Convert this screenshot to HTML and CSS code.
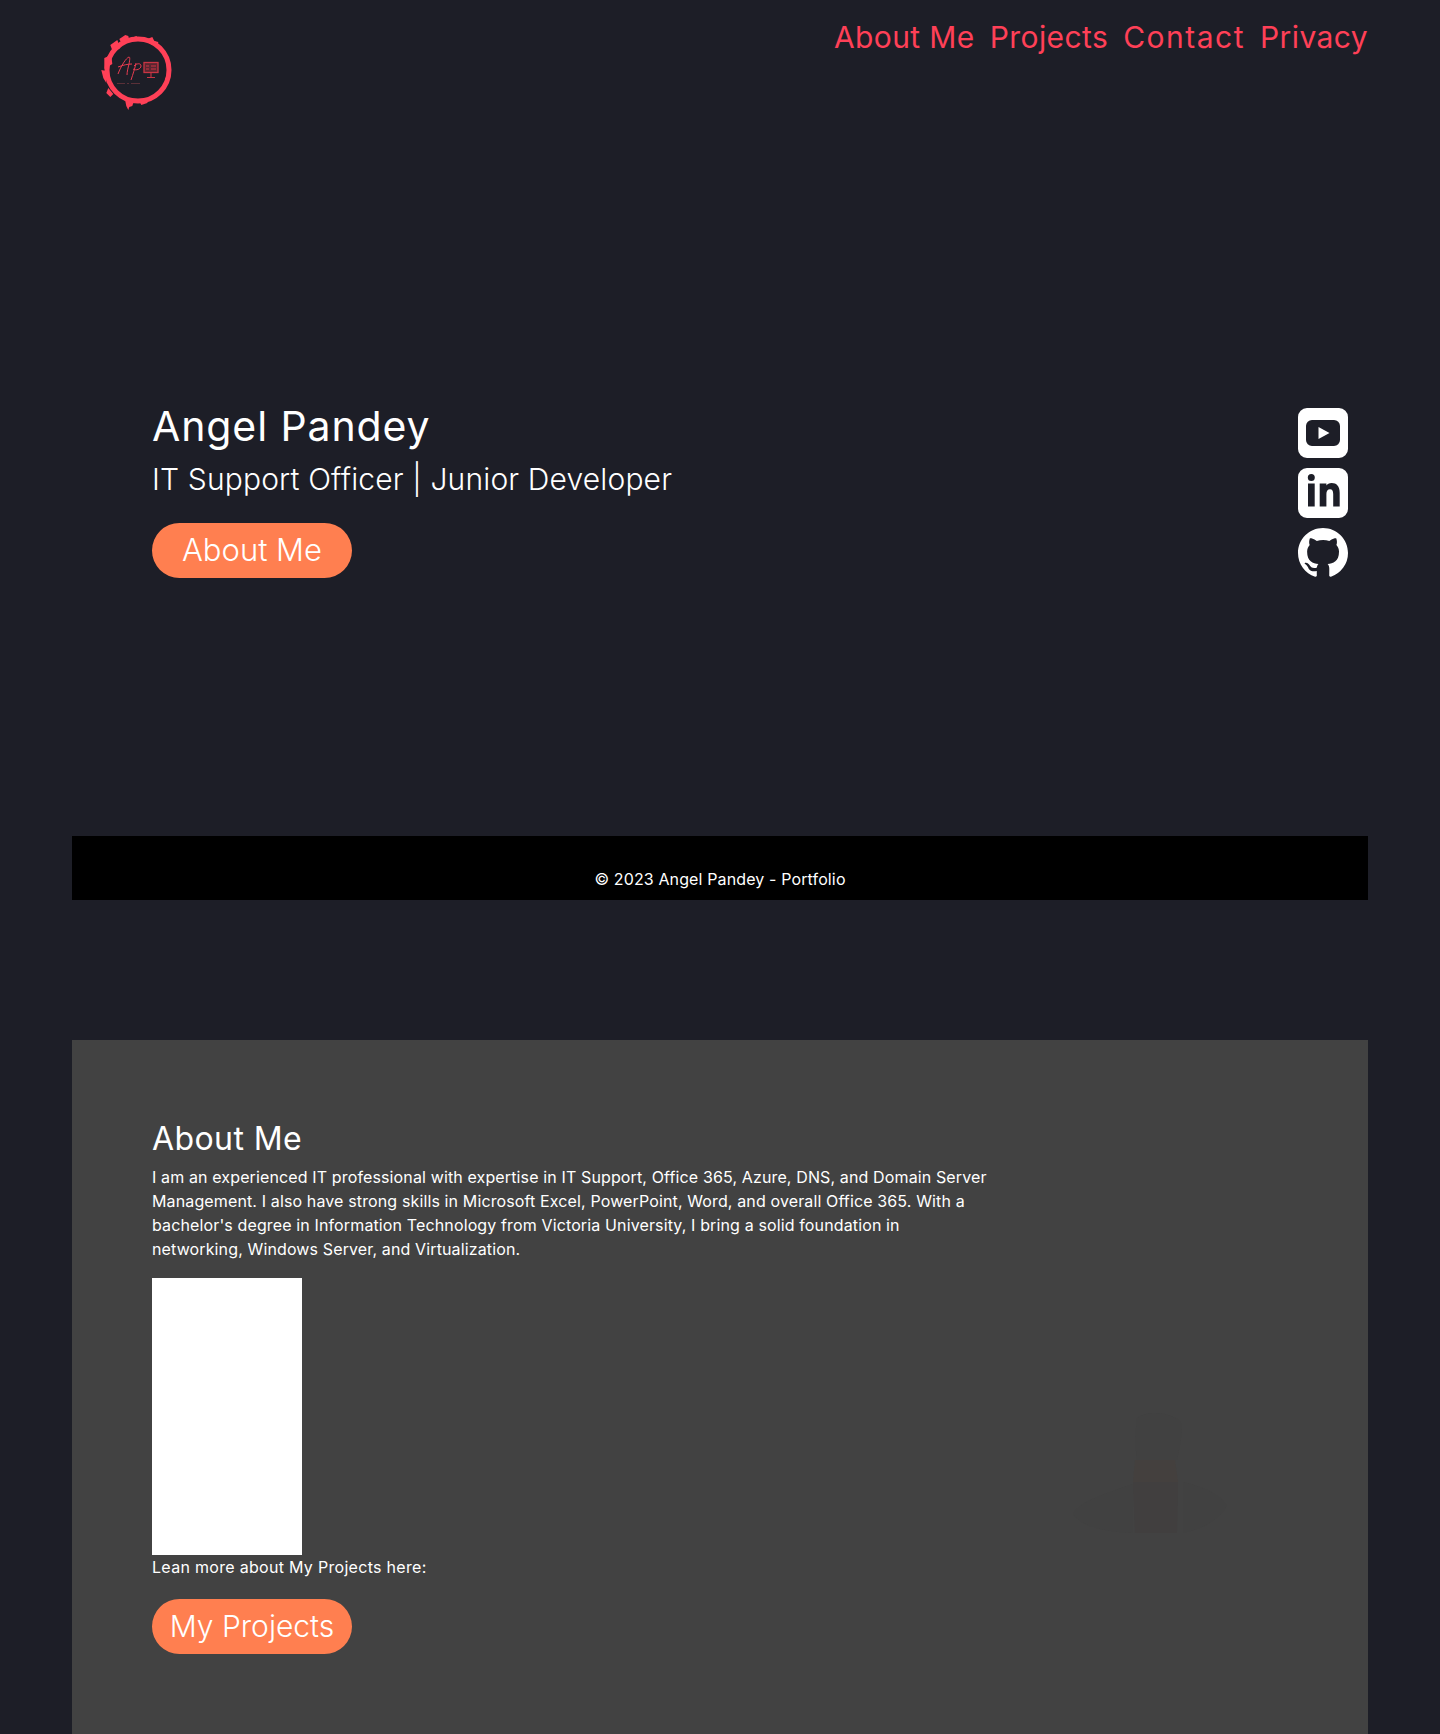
FILE: index.html
```html
<!DOCTYPE html>
<html lang="en">
<head>
<meta charset="utf-8">
<title>Angel Pandey - Portfolio</title>
<link rel="stylesheet" href="styles.css">
</head>
<body>
<div class="page">
  <header class="topbar">
    <a class="logo" href="#" aria-label="Angel Pandey logo">
      <svg viewBox="0 0 120 100" width="120" height="100">
        <circle cx="58" cy="50" r="31" fill="none" stroke="#ff4057" stroke-width="5"/>
        <path transform="translate(1.300 0)" fill="#ff4057" d="M29 25l7-5 3 8-7 5zM23 38l7-3 1 9-8 5zM38 19l6-4 3 1 1 4-8 3zM50 18l5-2 3 3-7 2zM60 17l6 2 5-2 2 4 4 1-1 5-9-4zM20 50l5 1 0 12-3-5zM27 68l5 6-3 3-4-4zM42 77l6 4 5-1-2 6-3 1-1 3-2-4-1-5zM58 81l9-2-1 4-6 2zM84 58l3-2-1 8-3 3z"/>
        <path d="M38 54c3-8 8-16 11-17 1 0 1 2 0 7-1 4-2 8-2 11M38 47c5-2 10-3 14-3M56 43c-1 5-3 11-5 17M54 46c3-3 7-3 7 0s-5 5-8 3" fill="none" stroke="#e73c50" stroke-width="1"/>
        <rect x="64" y="42.500" width="14" height="10" fill="#5a2630" stroke="#c93544" stroke-width="1.300"/>
        <path d="M66 46h3M71 46h5M66 49h3M71 49h5M67 57.500h8M71 53v4" stroke="#c93544" stroke-width="1.100"/>
        <path d="M37 63.500h8M47 63.500h2M51 63.500h9" stroke="#5a3038" stroke-width="1"/>
      </svg>
    </a>
    <nav class="nav">
      <a href="#">About Me</a>
      <a href="#">Projects</a>
      <a class="nav-wide" href="#">Contact</a>
      <a href="#">Privacy</a>
    </nav>
  </header>

  <section class="hero">
    <div class="intro">
      <h1>Angel Pandey</h1>
      <h2>IT Support Officer | Junior Developer</h2>
      <a class="btn btn-hero" href="#">About Me</a>
    </div>
    <div class="socials">
      <a href="#" aria-label="YouTube"><svg viewBox="0 0 50 50" width="50" height="50"><path fill-rule="evenodd" fill="#fff" d="M9 0h32a9 9 0 0 1 9 9v32a9 9 0 0 1-9 9H9a9 9 0 0 1-9-9V9a9 9 0 0 1 9-9zM14 12a6 6 0 0 0-6 6v14a6 6 0 0 0 6 6h22a6 6 0 0 0 6-6V18a6 6 0 0 0-6-6zM20.500 19l11 6-11 6z"/></svg></a>
      <a href="#" aria-label="LinkedIn"><svg viewBox="0 0 50 50" width="50" height="50"><path fill-rule="evenodd" fill="#fff" d="M9 0h32a9 9 0 0 1 9 9v32a9 9 0 0 1-9 9H9a9 9 0 0 1-9-9V9a9 9 0 0 1 9-9zM13.300 6a3.500 3.500 0 1 0 0 7 3.500 3.500 0 0 0 0-7zM10 15.500v23h6.700v-23zM21.700 15.500v23h6.700V26c0-3 1.300-4.700 3.600-4.700s3.200 1.700 3.200 4.700v12.500h6.500V25c0-7-3.200-10-8-10-2.700 0-4.300 1-5.300 2.500v-2z"/></svg></a>
      <a href="#" aria-label="GitHub"><svg viewBox="0 0 16 16" width="50" height="50"><path fill="#fff" d="M8 0C3.580 0 0 3.580 0 8c0 3.540 2.290 6.530 5.470 7.590.4.070.55-.17.55-.38 0-.19-.01-.82-.01-1.490-2.010.37-2.530-.49-2.690-.94-.09-.23-.48-.94-.82-1.130-.28-.15-.68-.52-.01-.53.630-.01 1.080.58 1.230.82.720 1.210 1.870.87 2.330.66.070-.52.280-.87.510-1.070-1.780-.2-3.640-.89-3.640-3.950 0-.87.310-1.590.820-2.150-.08-.2-.36-1.020.08-2.120 0 0 .67-.21 2.200.82.640-.18 1.320-.27 2-.27s1.360.09 2 .27c1.530-1.040 2.200-.82 2.200-.82.440 1.100.16 1.920.08 2.120.51.560.82 1.270.82 2.150 0 3.070-1.870 3.750-3.650 3.950.29.250.54.730.54 1.480 0 1.070-.01 1.930-.01 2.200 0 .21.150.46.550.38A8.010 8.010 0 0 0 16 8c0-4.420-3.580-8-8-8z"/></svg></a>
    </div>
  </section>

  <footer class="footer"><p>© 2023 Angel Pandey - Portfolio</p></footer>

  <section class="about">
    <h2 class="about-title">About Me</h2>
    <p class="about-text">I am an experienced IT professional with expertise in IT Support, Office 365, Azure, DNS, and Domain Server Management. I also have strong skills in Microsoft Excel, PowerPoint, Word, and overall Office 365. With a bachelor's degree in Information Technology from Victoria University, I bring a solid foundation in networking, Windows Server, and Virtualization.</p>
    <div class="white-box"></div>
    <p class="more">Lean more about My Projects here:</p>
    <a class="btn btn-projects" href="#">My Projects</a>
    <svg class="ghost" viewBox="0 0 154 124" width="154" height="124" aria-hidden="true">
      <path d="M0 104c6-12 30-20 60-30l0 49C30 122 8 116 0 104zM110 72c18 4 38 12 44 24-8 14-26 24-44 27z" fill="#414141"/>
      <path d="M64 8c10-8 34-6 44 4 2 14-2 26-4 38H64c-2-14-2-28 0-42z" fill="#414141"/>
      <path d="M62 50h40l3 22H60z" fill="#44403e"/>
      <path d="M60 72h45l-1 51H62z" fill="#413f3f"/>
    </svg>
  </section>
</div>
</body>
</html>
```

FILE: styles.css
```css
* { box-sizing: border-box; }
html, body { margin: 0; padding: 0; }
body {
  background: #1d1e27;
  color: #fff;
  font-family: "Inter", "Liberation Sans", sans-serif;
  height: 1734px;
  overflow: hidden;
}
.page { width: 1296px; margin: 0 auto; }
.topbar { display: flex; justify-content: space-between; height: 402px; }
.logo { display: block; margin: 20px 0 0 8px; height: 100px; }
.nav { display: flex; gap: 15px; height: 56px; align-items: center; margin-top: 9px; }
.nav a { color: #ff4057; text-decoration: none; font-size: 30px; font-weight: 400; letter-spacing: 0.4px; }
.nav .nav-wide { letter-spacing: 1.5px; }
.hero { display: flex; justify-content: space-between; height: 434px; padding: 0 20px 0 80px; align-items: flex-start; }
h1 { margin: 0; font-size: 41px; font-weight: 400; line-height: 48px; letter-spacing: 0.9px; }
.intro h2 { margin: 7px 0 0; font-size: 30px; font-weight: 300; line-height: 44px; letter-spacing: 0.15px; }
.btn { display: inline-flex; align-items: center; justify-content: center; width: 200px; height: 55px; padding-bottom: 2px; border-radius: 28px; background: #ff7f50; color: #fff; text-decoration: none; font-weight: 300; }
.btn-hero { margin-top: 22px; font-size: 31px; }
.socials { display: flex; flex-direction: column; gap: 10px; padding-top: 6px; }
.socials a { display: block; height: 50px; }
.socials svg { display: block; }
.footer { background: #000; height: 64px; display: flex; justify-content: center; align-items: flex-end; }
.footer p { margin: 0; font-size: 16px; line-height: 24px; padding-bottom: 9px; letter-spacing: 0.13px; }
.about { position: relative; margin-top: 140px; background: #424242; height: 694px; padding: 75px 80px 0; }
.about-title { margin: 0; font-size: 32px; font-weight: 400; line-height: 48px; letter-spacing: 0.4px; }
.about-text { margin: 2px 0 0; width: 840px; font-size: 16px; line-height: 24px; letter-spacing: 0.13px; }
.white-box { width: 150px; height: 277px; background: #fff; margin-top: 17px; }
.more { margin: 0; font-size: 16px; line-height: 24px; letter-spacing: 0.3px; }
.btn-projects { margin-top: 20px; font-size: 30px; }
.ghost { position: absolute; left: 1001px; top: 370px; }
```
